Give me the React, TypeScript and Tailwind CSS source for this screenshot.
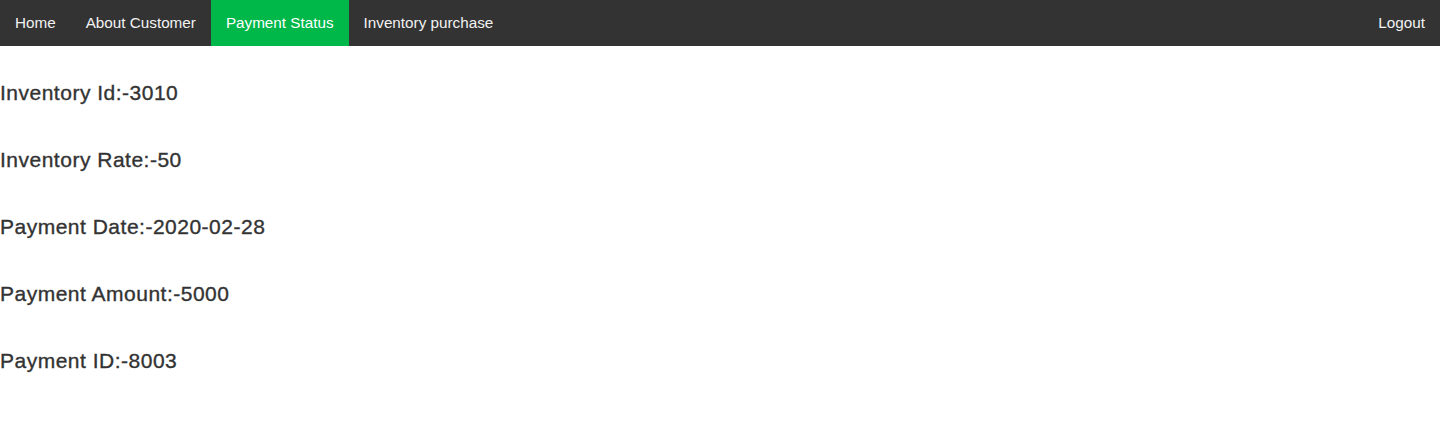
import React from "react";

const links = ["Home", "About Customer", "Payment Status", "Inventory purchase"];

const details = [
  "Inventory Id:-3010",
  "Inventory Rate:-50",
  "Payment Date:-2020-02-28",
  "Payment Amount:-5000",
  "Payment ID:-8003",
];

const App = () => {
  return (
    <div className="min-h-[436px] bg-white font-['Liberation_Sans',Arial,sans-serif]">
      <nav className="flex h-[46px] items-stretch bg-[#333333]">
        {links.map((link) => (
          <a
            key={link}
            href="#"
            className={`flex items-center px-[15px] text-[15.25px] text-[#f2f2f2] ${
              link === "Payment Status" ? "bg-[#00b749] text-white" : ""
            }`}
          >
            {link}
          </a>
        ))}
        <a href="#" className="ml-auto flex items-center px-[15px] text-[15.25px] text-[#f2f2f2]">
          Logout
        </a>
      </nav>
      <div className="flex flex-col gap-[45px] pt-[36px]">
        {details.map((item) => (
          <h3
            key={item}
            className="text-[21px] leading-[22px] tracking-[0.5px] text-[#333333] [-webkit-text-stroke:0.35px_#333333]"
          >
            {item}
          </h3>
        ))}
      </div>
    </div>
  );
};

export default App;
